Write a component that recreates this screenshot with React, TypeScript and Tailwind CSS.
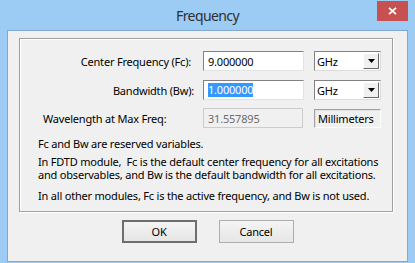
import React from "react";

const font = "font-['Noto_Sans','Liberation_Sans',sans-serif]";

function ComboBox({ value }: { value: string }) {
  return (
    <div className="ml-[10px] w-[67px] h-[20px] bg-white border border-t-[#828282] border-l-[#828282] border-r-[#dcdcdc] border-b-[#dcdcdc] flex items-center">
      <span className="pl-[2px] flex-1 leading-none">{value}</span>
      <div className="w-[16px] h-[16px] mr-[1px] bg-[#f0f0f0] border border-t-[#ffffff] border-l-[#ffffff] border-r-[#696969] border-b-[#696969] flex items-center justify-center">
        <svg width="7" height="4" viewBox="0 0 7 4">
          <path d="M0 0H7L3.5 4Z" fill="#000" />
        </svg>
      </div>
    </div>
  );
}

export default function App() {
  return (
    <div className={`w-[415px] h-[263px] bg-[#9ccbf3] flex flex-col ${font} text-[11px] tracking-[-0.2px] text-black`}>
      <div className="h-[30px] relative flex items-center justify-center">
        <span className="text-[14px] text-[#2f2f2f] tracking-[-0.6px] pt-[1px]">Frequency</span>
        <div className="absolute right-[7px] top-[1px] w-[31px] h-[20px] bg-[#c75050] flex items-center justify-center">
          <svg width="9" height="8" viewBox="0 0 9 8">
            <path d="M1 0.8L8 7.2M8 0.8L1 7.2" stroke="#fff" strokeWidth="1.8" />
          </svg>
        </div>
      </div>
      <div className="mx-[7px] h-[232px] border border-[#83a8cd] bg-[#f0f0f0] flex flex-col">
        <div className="ml-[11px] mt-[7px] w-[374px] h-[174px] border border-[#a0a0a0] shadow-[1px_1px_0_#ffffff,inset_1px_1px_0_#ffffff] flex flex-col">
          <div className="mt-[12px] flex items-center h-[20px]">
            <div className="w-[183px] text-right pr-[12px] leading-none">Center Frequency (Fc):</div>
            <div className="w-[101px] h-[20px] bg-white border border-t-[#828282] border-l-[#828282] border-r-[#e3e3e3] border-b-[#e3e3e3] flex items-center pl-[4px]">
              <span className="leading-none">9.000000</span>
            </div>
            <ComboBox value="GHz" />
          </div>
          <div className="mt-[9px] flex items-center h-[20px]">
            <div className="w-[183px] text-right pr-[9px] leading-none">Bandwidth (Bw):</div>
            <div className="w-[101px] h-[20px] bg-white border border-t-[#828282] border-l-[#828282] border-r-[#e3e3e3] border-b-[#e3e3e3] flex items-center pl-[4px]">
              <span className="leading-[14px] bg-[#3399ff] text-white">1.000000</span>
            </div>
            <ComboBox value="GHz" />
          </div>
          <div className="mt-[8px] flex items-center h-[20px]">
            <div className="w-[183px] pl-[23px] leading-none">Wavelength at Max Freq:</div>
            <div className="w-[100px] h-[20px] bg-[#f0f0f0] border border-[#cccccc] flex items-center pl-[4px] text-[#6d6d6d]">
              <span className="leading-none">31.557895</span>
            </div>
            <div className="ml-[11px] w-[67px] h-[19px] bg-[#f0f0f0] border border-t-[#a0a0a0] border-l-[#a0a0a0] border-r-[#ffffff] border-b-[#ffffff] shadow-[inset_1px_1px_0_#e3e3e3] flex items-center pl-[3px]">
              <span className="leading-none">Millimeters</span>
            </div>
          </div>
          <div className="ml-[18px] mt-[9px] leading-[13px]">
            <p>Fc and Bw are reserved variables.</p>
            <p className="mt-[5px] whitespace-pre">In FDTD module,  Fc is the default center frequency for all excitations</p>
            <p className="whitespace-nowrap">and observables, and Bw is the default bandwidth for all excitations.</p>
            <p className="mt-[8px] whitespace-nowrap">In all other modules, Fc is the active frequency, and Bw is not used.</p>
          </div>
        </div>
        <div className="mt-[8px] flex justify-center gap-[22px]">
          <button className="w-[75px] h-[23px] border-2 border-[#6e6e6e] bg-gradient-to-b from-[#f4f4f4] to-[#e6e6e6] flex items-center justify-center leading-none">
            OK
          </button>
          <button className="w-[75px] h-[23px] border border-[#adadad] bg-gradient-to-b from-[#f4f4f4] to-[#e6e6e6] flex items-center justify-center leading-none">
            Cancel
          </button>
        </div>
      </div>
    </div>
  );
}
